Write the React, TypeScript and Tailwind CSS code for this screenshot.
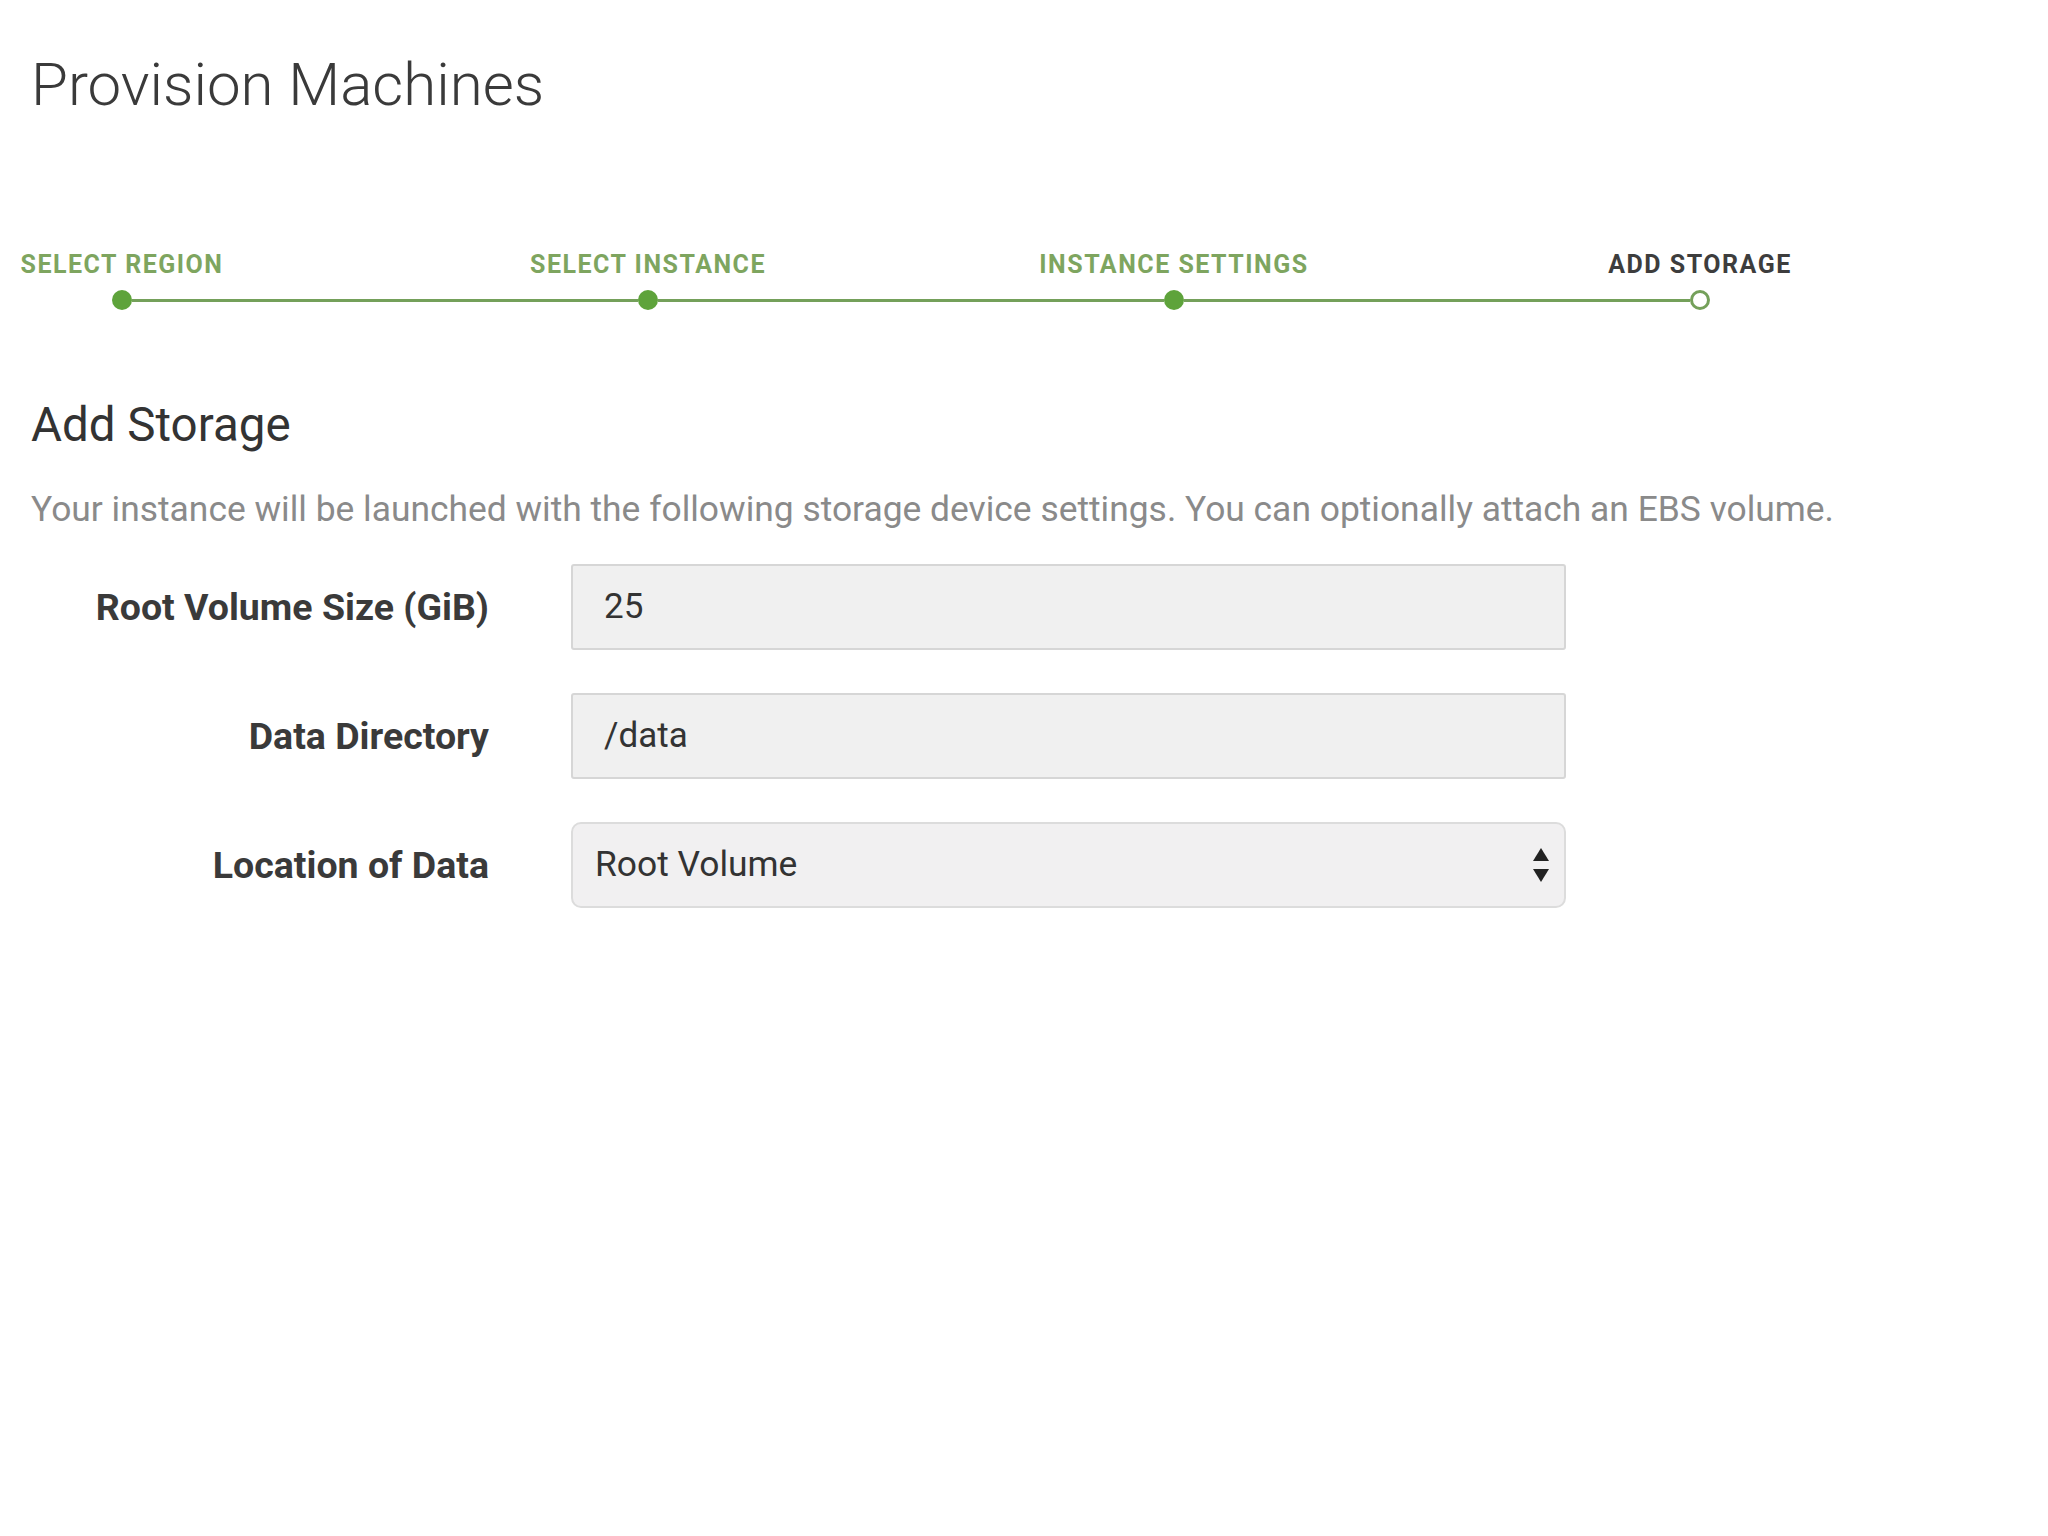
import React from "react";

const steps = [
  { label: "SELECT REGION", done: true },
  { label: "SELECT INSTANCE", done: true },
  { label: "INSTANCE SETTINGS", done: true },
  { label: "ADD STORAGE", done: false },
];

const fields = [
  { label: "Root Volume Size (GiB)", value: "25" },
  { label: "Data Directory", value: "/data" },
];

const Stepper: React.FC = () => {
  return (
    <div className="ml-[112px] w-[1598px] mt-[127px]">
      {/* labels */}
      <div className="flex justify-between">
        {steps.map((s) => (
          <div key={s.label} className="w-[20px] flex flex-col items-center">
            <span
              className={`whitespace-nowrap text-[25px] font-bold tracking-[1.5px] leading-none ${
                s.done ? "text-[#7ea55f]" : "text-[#3d3d3d]"
              }`}
            >
              {s.label}
            </span>
          </div>
        ))}
      </div>
      {/* dots + line */}
      <div className="flex items-center mt-[13px]">
        {steps.map((s, i) => (
          <React.Fragment key={s.label}>
            {i > 0 && <div className="flex-1 h-[3px] bg-[#74a05a]" />}
            {s.done ? (
              <div className="w-[20px] h-[20px] rounded-full bg-[#5ea33b] shrink-0" />
            ) : (
              <div className="w-[20px] h-[20px] rounded-full border-[3px] border-[#74a05a] bg-white shrink-0" />
            )}
          </React.Fragment>
        ))}
      </div>
    </div>
  );
};

const App: React.FC = () => {
  return (
    <div
      className="w-[2048px] h-[1536px] bg-white text-[#333]"
      style={{ fontFamily: "Roboto, 'Liberation Sans', sans-serif" }}
    >
      <div className="pt-[45px] pl-[31px]">
        <h1 className="text-[60px] font-light leading-[80px] text-[#3a3a3a]">
          Provision Machines
        </h1>
      </div>

      <Stepper />

      <div className="pl-[31px] mt-[85px]">
        <h2 className="text-[47.5px] font-normal leading-[60px] text-[#333]">
          Add Storage
        </h2>
        <p className="mt-[32px] text-[35.4px] leading-[44px] text-[#8a8a8a]">
          Your instance will be launched with the following storage device
          settings. You can optionally attach an EBS volume.
        </p>
      </div>

      {/* form */}
      <div className="mt-[33px] flex flex-col gap-[43px]">
        {fields.map((f) => (
          <div key={f.label} className="flex items-center">
            <label className="w-[489px] text-right text-[37.5px] font-bold text-[#3a3a3a]">
              {f.label}
            </label>
            <div className="ml-[82px] w-[995px] h-[86px] flex items-center bg-[#f0f0f0] border-2 border-[#d6d6d6] rounded-[3px] pl-[31px] text-[35px] text-[#333]">
              {f.value}
            </div>
          </div>
        ))}
        <div className="flex items-center">
          <label className="w-[489px] text-right text-[37.5px] font-bold text-[#3a3a3a]">
            Location of Data
          </label>
          <div className="ml-[82px] w-[995px] h-[86px] flex items-center justify-between bg-[#f1f0f1] border-2 border-[#dcdcdc] rounded-[10px] pl-[22px] pr-[14px] text-[35.4px] text-[#333]">
            <span>Root Volume</span>
            <svg width="18" height="38" viewBox="0 0 18 38">
              <path d="M9 2 L17 15 L1 15 Z" fill="#222" />
              <path d="M9 36 L17 23 L1 23 Z" fill="#222" />
            </svg>
          </div>
        </div>
      </div>
    </div>
  );
};

export default App;
